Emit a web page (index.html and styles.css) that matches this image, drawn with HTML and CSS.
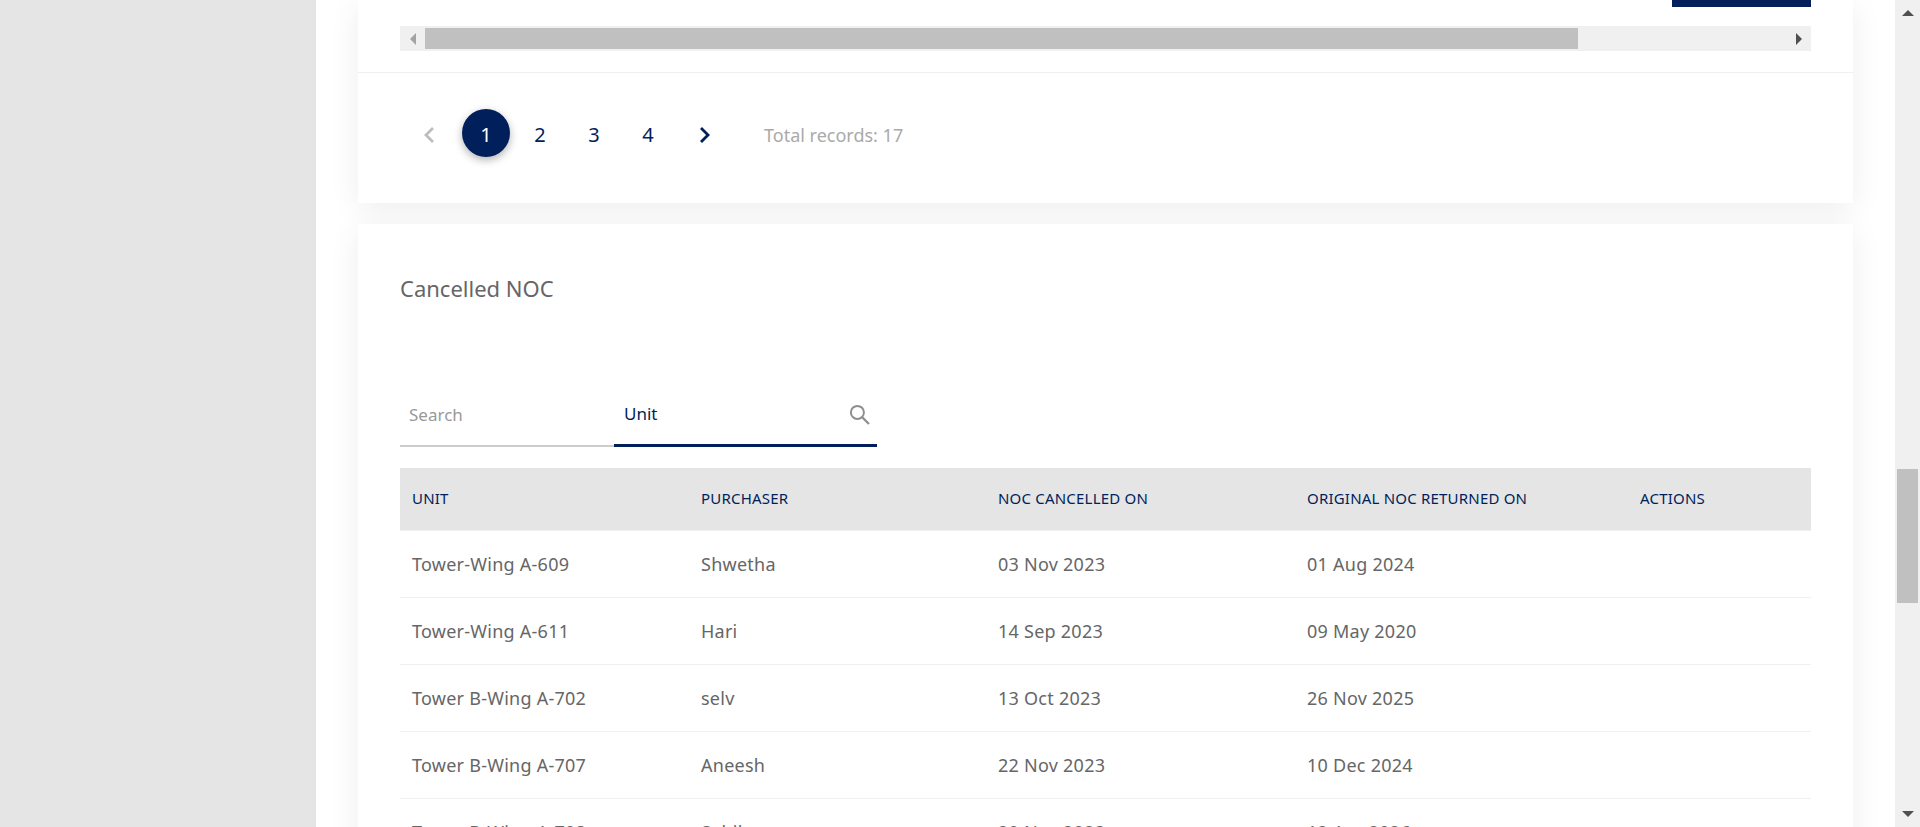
FILE: index.html
```html
<!DOCTYPE html>
<html lang="en">

<head>
    <meta charset="UTF-8">
    <meta name="viewport" content="width=device-width, initial-scale=1.0">
    <title>NOC</title>
    <link rel="stylesheet" href="styles.css">
</head>

<body>
    <div class="shell">
        <aside class="sidebar"></aside>

        <main class="content">
            <!-- Issued NOC card, scrolled partly out of view -->
            <section class="card card-top">
                <div class="table-end">
                    <a class="btn-sliver" href="#"></a>
                    <div class="hscroll">
                        <span class="hscroll-btn"><i class="tri tri-left"></i></span>
                        <span class="hscroll-thumb"></span>
                        <span class="hscroll-btn"><i class="tri tri-right"></i></span>
                    </div>
                </div>
                <div class="pager">
                    <svg class="chev chev-prev" viewBox="0 0 12 18" width="12" height="18">
                        <path d="M10 2 3 9l7 7" fill="none" stroke="#bdbdbd" stroke-width="2.8" />
                    </svg>
                    <span class="page page-active">1</span>
                    <span class="page">2</span>
                    <span class="page">3</span>
                    <span class="page">4</span>
                    <svg class="chev chev-next" viewBox="0 0 12 18" width="12" height="18">
                        <path d="M2 2l7 7-7 7" fill="none" stroke="#001f5b" stroke-width="2.8" />
                    </svg>
                    <span class="total">Total records: 17</span>
                </div>
            </section>

            <!-- Cancelled NOC -->
            <section class="card card-bottom">
                <h2 class="card-title">Cancelled NOC</h2>

                <div class="search">
                    <div class="search-label">Search</div>
                    <div class="search-field">
                        <span>Unit</span>
                        <svg class="search-icon" viewBox="0 0 20 20" width="21" height="21">
                            <circle cx="8" cy="8" r="6.2" fill="none" stroke="#8e8e8e" stroke-width="1.9" />
                            <path d="M12.6 12.6 19 19" fill="none" stroke="#8e8e8e" stroke-width="2.2" />
                        </svg>
                    </div>
                </div>

                <table class="noc-table">
                    <thead>
                        <tr>
                            <th class="col-unit">UNIT</th>
                            <th class="col-purchaser">PURCHASER</th>
                            <th class="col-cancelled">NOC CANCELLED ON</th>
                            <th class="col-returned">ORIGINAL NOC RETURNED ON</th>
                            <th>ACTIONS</th>
                        </tr>
                    </thead>
                    <tbody>
                        <tr>
                            <td>Tower-Wing A-609</td>
                            <td>Shwetha</td>
                            <td>03 Nov 2023</td>
                            <td>01 Aug 2024</td>
                            <td></td>
                        </tr>
                        <tr>
                            <td>Tower-Wing A-611</td>
                            <td>Hari</td>
                            <td>14 Sep 2023</td>
                            <td>09 May 2020</td>
                            <td></td>
                        </tr>
                        <tr>
                            <td>Tower B-Wing A-702</td>
                            <td>selv</td>
                            <td>13 Oct 2023</td>
                            <td>26 Nov 2025</td>
                            <td></td>
                        </tr>
                        <tr>
                            <td>Tower B-Wing A-707</td>
                            <td>Aneesh</td>
                            <td>22 Nov 2023</td>
                            <td>10 Dec 2024</td>
                            <td></td>
                        </tr>
                        <tr>
                            <td>Tower B-Wing A-708</td>
                            <td>Sahil</td>
                            <td>20 Nov 2023</td>
                            <td>12 Apr 2026</td>
                            <td></td>
                        </tr>
                    </tbody>
                </table>
            </section>
        </main>

        <div class="vscroll">
            <i class="tri tri-up"></i>
            <span class="vscroll-thumb"></span>
            <i class="tri tri-down"></i>
        </div>
    </div>
</body>

</html>
```

FILE: styles.css
```css
* {
    box-sizing: border-box;
}

body {
    margin: 0;
    background-color: #fff;
    font-family: "Noto Sans", "Open Sans", sans-serif;
    color: #666;
}

.shell {
    display: flex;
    height: 827px;
    overflow: hidden;
}

.sidebar {
    width: 316px;
    flex-shrink: 0;
    background-color: #e5e5e5;
}

.content {
    flex: 1;
    min-width: 0;
    padding: 0 42px;
    display: flex;
    flex-direction: column;
    gap: 21px;
}

.card {
    background-color: #fff;
    box-shadow: 0 6px 30px rgba(0, 0, 0, 0.07);
    flex-shrink: 0;
}

/* Top card */

.card-top {
    height: 203px;
}

.table-end {
    padding: 0 42px;
    height: 73px;
    border-bottom: 1px solid #f0f0f0;
    display: flex;
    flex-direction: column;
    align-items: flex-end;
}

.btn-sliver {
    display: block;
    width: 139px;
    height: 7px;
    background-color: #001f5b;
}

.hscroll {
    width: 100%;
    height: 25px;
    margin-top: 19px;
    padding: 2px 0;
    background-color: #f0f0f0;
    display: flex;
    justify-content: space-between;
}

.hscroll-btn {
    width: 25px;
    display: flex;
    align-items: center;
    justify-content: center;
}

.hscroll-thumb {
    width: 1153px;
    background-color: #c0c0c0;
    margin-right: auto;
}

.tri {
    display: block;
    width: 0;
    height: 0;
    border-style: solid;
    border-color: transparent;
}

.tri-left {
    border-width: 6px 6px 6px 0;
    border-right-color: #a3a3a3;
}

.tri-right {
    border-width: 6px 0 6px 6px;
    border-left-color: #505050;
}

.tri-up {
    border-width: 0 6px 6px;
    border-bottom-color: #505050;
}

.tri-down {
    border-width: 6px 6px 0;
    border-top-color: #505050;
}

.pager {
    display: flex;
    align-items: center;
    padding: 36px 0 0 42px;
}

.chev {
    margin-top: 3px;
}

.chev-prev {
    margin-right: 27px;
    margin-left: 23px;
}

.page {
    width: 48px;
    height: 48px;
    margin-right: 6px;
    padding-top: 2px;
    border-radius: 50%;
    display: flex;
    align-items: center;
    justify-content: center;
    font-size: 20px;
    color: #001f5b;
}

.page-active {
    background-color: #001f5b;
    color: #fff;
    box-shadow: 0 3px 8px rgba(0, 0, 0, 0.3);
}

.chev-next {
    margin-left: 21px;
}

.total {
    margin-left: 53px;
    padding-top: 3px;
    font-size: 18px;
    color: #aaa;
}

/* Cancelled NOC card */

.card-bottom {
    padding: 0 42px;
}

.card-title {
    margin: 0;
    padding-top: 49px;
    font-size: 22px;
    font-weight: 400;
    line-height: 30px;
    color: #666;
}

.search {
    display: flex;
    margin-top: 87px;
    width: 477px;
    height: 57px;
}

.search-label {
    width: 214px;
    padding: 13px 0 0 9px;
    font-size: 17px;
    line-height: 24px;
    color: #999;
    border-bottom: 2px solid #ccc;
}

.search-field {
    flex: 1;
    padding: 0 7px 0 10px;
    display: flex;
    align-items: flex-start;
    justify-content: space-between;
    font-size: 17px;
    line-height: 24px;
    color: #001f5b;
    border-bottom: 3px solid #001f5b;
}

.search-field span {
    padding-top: 12px;
}

.search-icon {
    margin-top: 14px;
}

.noc-table {
    width: 100%;
    margin-top: 21px;
    border-collapse: collapse;
    table-layout: fixed;
}

.noc-table th {
    height: 62px;
    padding: 0 12px 2px;
    background-color: #e5e5e5;
    text-align: left;
    font-size: 15px;
    letter-spacing: 0.2px;
    font-weight: 400;
    color: #001f5b;
    border-bottom: 1px solid #f0f0f0;
}

.noc-table td {
    height: 67px;
    padding: 0 12px;
    font-size: 18px;
    letter-spacing: 0.25px;
    color: #666;
    border-bottom: 1px solid #f0f0f0;
}

.col-unit {
    width: 289px;
}

.col-purchaser {
    width: 297px;
}

.col-cancelled {
    width: 309px;
}

.col-returned {
    width: 333px;
}

/* Page scrollbar */

.vscroll {
    width: 25px;
    flex-shrink: 0;
    background-color: #f0f0f0;
    display: flex;
    flex-direction: column;
    align-items: center;
    padding-top: 10px;
}

.vscroll-thumb {
    width: 21px;
    height: 134px;
    margin-top: 453px;
    background-color: #c0c0c0;
}

.vscroll .tri-down {
    margin-top: 208px;
}
```
